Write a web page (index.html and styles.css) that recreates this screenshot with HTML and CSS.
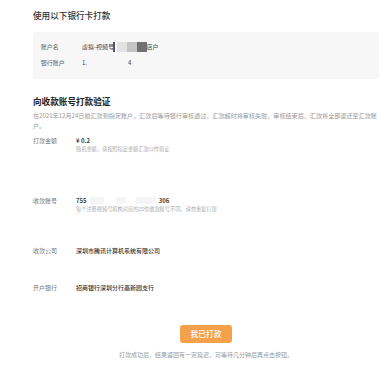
FILE: index.html
```html
<!DOCTYPE html>
<html lang="zh-CN">
<head>
<meta charset="utf-8">
<link rel="stylesheet" href="styles.css">
</head>
<body>
<div class="page">
  <h2 class="title">使用以下银行卡打款</h2>
  <div class="card">
    <div class="card-row">
      <span class="card-label">账户名</span>
      <span class="card-value">虚拟-视频号<span class="blur b0"></span><span class="blur b1"></span><span class="blur b2"></span><span class="blur b3"></span>店户</span>
    </div>
    <div class="card-row">
      <span class="card-label">银行账户</span>
      <span class="card-value">1.<span class="gap g1"></span>4</span>
    </div>
  </div>

  <h2 class="title title-2">向收款账号打款验证</h2>
  <p class="desc">在2021年12月24日前汇款到指定账户，汇款后等待银行审核通过，汇款超时将审核失败，审核结束后，汇款将全部退还至汇款账<br>户。</p>

  <div class="row row-amount">
    <span class="label">打款金额</span>
    <div class="val">
      <div class="strong">¥ 0.2</div>
      <div class="hint">随机金额，请按照指定金额汇款以作验证</div>
    </div>
  </div>
  <div class="row row-account">
    <span class="label">收款账号</span>
    <div class="val">
      <div class="strong">755<span class="faint f1"></span><span class="faint f2"></span><span class="faint f3"></span>306</div>
      <div class="hint">每个注册视频号机构对应的25位收款账号不同，请勿重复打款</div>
    </div>
  </div>
  <div class="row row-company">
    <span class="label">收款公司</span>
    <div class="val"><div class="medium">深圳市腾讯计算机系统有限公司</div></div>
  </div>
  <div class="row row-bank">
    <span class="label">开户银行</span>
    <div class="val"><div class="medium">招商银行深圳分行高新园支行</div></div>
  </div>

  <div class="actions">
    <button class="btn">我已打款</button>
    <p class="footnote">打款成功后，结果返回有一定延迟，可等待几分钟后再点击按钮。</p>
  </div>
</div>
</body>
</html>
```

FILE: styles.css
```css
* { box-sizing: border-box; }
html, body { margin: 0; padding: 0; background: #fff; }
body {
  font-family: "Noto Sans CJK SC", "Noto Sans", sans-serif;
  color: #333;
}
.page {
  width: 379px;
  padding-left: 33px;
  padding-top: 9px;
  display: flex;
  flex-direction: column;
}
.title {
  margin: 0;
  font-size: 8.6px;
  line-height: 12px;
  font-weight: 500;
  color: #333;
}
.card {
  margin-top: 11px;
  height: 47px;
  background: #f7f7f7;
  border-radius: 3px;
  padding: 9.7px 0 0 7.7px;
  display: flex;
  flex-direction: column;
  gap: 6.6px;
}
.card-row {
  display: grid;
  grid-template-columns: 41.3px 1fr;
  font-size: 6px;
  line-height: 10px;
  height: 10px;
}
.card-label { color: #666; }
.card-value { color: #444; display: flex; align-items: center; }
.blur { display: inline-block; height: 10px; }
.b0 { width: 1.5px; background: #555; margin-left: -1px; }
.b1 { width: 10px; background: #e2e2e2; margin-left: 2px; }
.b2 { width: 10px; background: #c4c4c4; }
.b3 { width: 10px; background: #707070; }
.gap { display: inline-block; }
.g1 { width: 41px; }

.title-2 {
  margin-top: 16px;
  font-weight: 700;
  color: #222;
  font-size: 8.6px;
}
.desc {
  margin: 3.7px 0 0;
  font-size: 6.1px;
  line-height: 10.7px;
  color: #999;
  width: 354px;
}
.row {
  display: grid;
  grid-template-columns: 43px 1fr;
  font-size: 6px;
  line-height: 8px;
}
.row-amount { margin-top: 4.6px; }
.row-account { margin-top: 44.5px; }
.row-company { margin-top: 34.5px; }
.row-bank { margin-top: 29px; }
.label { color: #777; }
.strong { font-weight: 700; color: #444; display: flex; align-items: center; height: 8px; white-space: pre; }
.medium { font-weight: 500; color: #333; }
.hint { font-size: 5.2px; line-height: 7.5px; color: #aaa; }
.faint { display: inline-block; height: 7px; background: #f5f5f5; }
.f1 { width: 14px; margin-left: 3px; }
.f2 { width: 10px; margin-left: 12px; }
.f3 { width: 20px; margin-left: 10px; margin-right: 3px; }

.actions {
  width: 346px;
  display: flex;
  flex-direction: column;
  align-items: center;
  margin-top: 33.6px;
}
.btn {
  width: 51.4px;
  height: 17.4px;
  border: none;
  border-radius: 3px;
  background: #f5a04b;
  color: #fff;
  font-family: "Noto Sans CJK SC", sans-serif;
  font-size: 7.7px;
  font-weight: 500;
  padding: 0;
  line-height: 17.4px;
}
.footnote {
  margin: 8.3px 0 0;
  font-size: 6px;
  line-height: 8px;
  color: #999;
}
```
